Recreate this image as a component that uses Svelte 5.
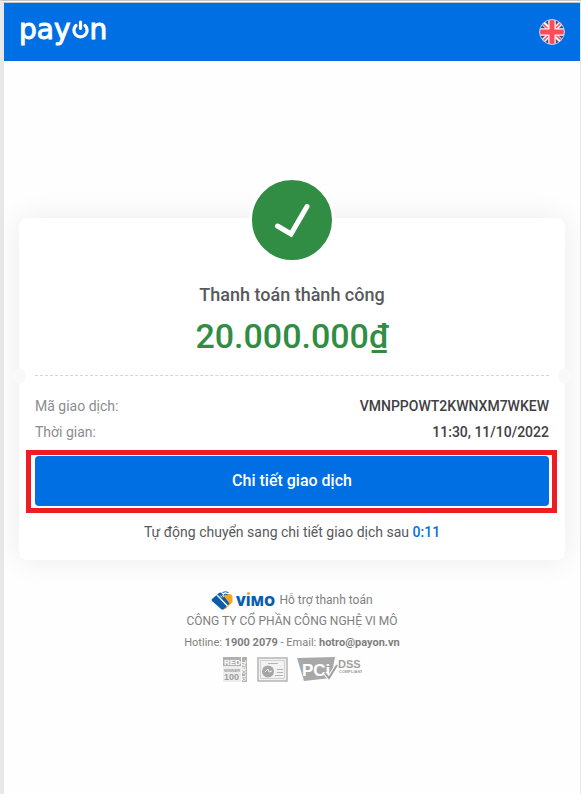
<script lang="ts">
    import { onMount } from 'svelte'

    const rows = [
        { label: 'Mã giao dịch:', value: 'VMNPPOWT2KWNXM7WKEW' },
        { label: 'Thời gian:', value: '11:30, 11/10/2022' }
    ]

    let seconds = $state(11)
    let paused = $state(true)

    const countdown = $derived(`0:${String(seconds).padStart(2, '0')}`)

    const resume = () => {
        paused = false
    }

    onMount(() => {
        const timer = setInterval(() => {
            if (!paused && seconds > 0) seconds -= 1
        }, 1000)
        return () => clearInterval(timer)
    })
</script>

<div class="page">
    <header>
        <a class="logo" href="#home" aria-label="payon">
            <span>pay</span>
            <svg width="17" height="20" viewBox="0 0 17 20" fill="none" stroke="#fff" stroke-width="3.2" stroke-linecap="round">
                <path d="M4 5.500a6.600 6.600 0 1 0 9 0" />
                <path d="M8.500 2v6.500" />
            </svg>
            <span>n</span>
        </a>
        <button class="lang" aria-label="English">
            <svg width="26" height="26" viewBox="0 0 26 26">
                <clipPath id="flag"><circle cx="13" cy="13" r="12.5" /></clipPath>
                <g clip-path="url(#flag)">
                    <path fill="#41479b" d="M0 0h26v26H0z" />
                    <path stroke="#f5f5f5" stroke-width="4.500" d="M2 2l22 22M24 2L2 24" />
                    <path stroke="#ff4b55" stroke-width="1.500" d="M2 3l10 10M24 2L14 12M2 24l10-10M24 23L14 13" />
                    <path stroke="#f5f5f5" stroke-width="7.500" d="M13 0v26M0 13h26" />
                    <path stroke="#ff4b55" stroke-width="5" d="M13 0v26M0 13h26" />
                </g>
                <circle cx="13" cy="13" r="12.4" fill="none" stroke="#b5d3f5" />
            </svg>
        </button>
    </header>

    <main>
        <section class="card">
            <div class="status">
                <svg width="80" height="80" viewBox="0 0 80 80" fill="none" stroke="#fff" stroke-width="5" stroke-linecap="round">
                    <path d="M25.500 46l13.500 8L55 26.500" />
                </svg>
            </div>
            <h1>Thanh toán thành công</h1>
            <p class="amount">20.000.000₫</p>
            <div class="divider"></div>
            <dl>
                {#each rows as row}
                    <div class="row">
                        <dt>{row.label}</dt>
                        <dd>{row.value}</dd>
                    </div>
                {/each}
            </dl>
            <div class="action">
                <button class="detail" onclick={resume}>Chi tiết giao dịch</button>
            </div>
            <p class="redirect">Tự động chuyển sang chi tiết giao dịch sau <b>{countdown}</b></p>
        </section>
    </main>

    <footer>
        <div class="support">
            <svg width="65" height="20" viewBox="0 0 65 20">
                <path fill="#faa61a" d="M13 3h5q3 0 3.500 3v5L14 18.500 9 10z" />
                <path fill="#0b5cab" d="M1 8l7-6q1.500-1 2.500 0l8 10.500-5.500 5.500q-1.500 1.500-3 0L1 10q-1-1 0-2z" />
                <path fill="none" stroke="#0b5cab" d="M11.500 1.500q3-1.500 6 0M13 3.800q2-1 3.500 0" />
                <path fill="none" stroke="#fff" stroke-width="1.300" d="M6 4l10.500 11" />
                <path fill="none" stroke="#fff" d="M9.500 4.500l1.500 2M11.500 4l1.500 2" />
                <text x="25" y="15" fill="#0b5cab" font-family="Open Sans" font-size="14" font-weight="800">VIMO</text>
                <circle cx="37.500" cy="2.500" r="1.600" fill="#faa61a" />
            </svg>
            <span>Hỗ trợ thanh toán</span>
        </div>
        <p class="company">CÔNG TY CỔ PHẦN CÔNG NGHỆ VI MÔ</p>
        <p class="contact">Hotline: <b>1900 2079</b> - Email: <b>hotro@payon.vn</b></p>
        <div class="badges">
            <svg width="25" height="25" viewBox="0 0 25 25" font-family="Liberation Sans" font-weight="700" fill="#9e9e9e">
                <path fill="#b0b0b0" d="M0 0h18v9H0zM19 0h5v25h-5z" />
                <path fill="#ededed" d="M0 9h18v16H0z" />
                <text x="1" y="8" font-size="8" fill="#fff">RED</text>
                <text x="1" y="15" font-size="4">WINNER</text>
                <text x="1" y="23" font-size="9">100</text>
                <text transform="translate(23 24) rotate(-90)" font-size="5" fill="#fff">GLOBAL</text>
            </svg>
            <svg width="31" height="25" viewBox="0 0 31 25">
                <path fill="#f2f2f2" stroke="#b4b4b4" stroke-width="1.500" d="M1 1h29v23H1z" />
                <path fill="none" stroke="#d0d0d0" d="M3.500 3.500h24v18h-24z" />
                <circle cx="11" cy="14.500" r="6" fill="#a6a6a6" />
                <path fill="none" stroke="#eee" d="M8 15l3-3 1 3 3-1" />
                <path stroke="#b4b4b4" d="M11 6.500h10M20 12.500h6M20 15.500h6M18 18.500h8" />
            </svg>
            <svg width="65" height="25" viewBox="0 0 65 25" font-family="Liberation Sans" font-weight="700">
                <path fill="#a8a8a8" d="M0 1l38-1-4 21-27 3z" />
                <text x="5" y="19" font-size="17" fill="#fff">PCi</text>
                <path fill="none" stroke="#fff" stroke-width="4" d="M28 16l4 5L40 8" />
                <path fill="none" stroke="#9e9e9e" stroke-width="2" d="M28 16l4 5L40 8" />
                <text x="41" y="11" font-size="11" fill="#a0a0a0">DSS</text>
                <text x="42" y="16" font-size="4" fill="#a0a0a0">COMPLIANT</text>
            </svg>
        </div>
    </footer>
</div>

<style>
    :global(body){margin:0;background:#fff;}
    .page{box-sizing:border-box;min-height:100vh;border-top:3px double #c6c6c6;border-left:4px solid #e8e8e8;border-right:1px solid #e8e8e8;background:#fefefe;font-family:Roboto,"Noto Sans",sans-serif;font-size:14px;color:#58595b;}
    h1,p,dl,dd{margin:0;}
    button{font-family:inherit;border:none;cursor:pointer;}
    b{font-weight:500;}
    svg{display:block;flex:none;}

    header{display:flex;justify-content:space-between;align-items:center;height:58px;padding:0 15px;background:#006fe3;}
    .logo{display:flex;align-items:center;gap:1px;padding-bottom:4px;font-family:"DejaVu Sans",sans-serif;font-size:28px;line-height:32px;color:#fff;text-decoration:none;-webkit-text-stroke:1px #fff;}
    .lang{padding:0;background:none;}

    main{padding:157px 15px 0;}
    .card{padding:0 16px 16px;border-radius:8px;background:#fff;box-shadow:0 0 30px rgba(0,0,0,0.08);text-align:center;}
    .status{display:inline-block;margin-top:-41px;border:3px solid #fff;border-radius:50%;background:#318d43;}
    h1{margin-top:15px;font-size:18px;line-height:28px;font-weight:500;}
    .amount{margin-top:7px;font-size:34px;line-height:40px;font-weight:500;color:#318d43;}
    .divider{position:relative;margin-top:19px;border-top:1px dashed #d5d5d5;}
    .divider::before,.divider::after{content:"";position:absolute;top:-7px;width:14px;height:14px;border-radius:50%;background:#f9f9f9;}
    .divider::before{left:-23px;}
    .divider::after{right:-23px;}
    dl{margin-top:17px;}
    .row{display:flex;justify-content:space-between;line-height:26px;}
    dt{color:#8a8d91;}
    dd{font-weight:500;color:#3f4044;}
    .action{position:relative;margin-top:11px;}
    .action::after{content:"";position:absolute;inset:-6px -8px -7px -9px;border:5px solid #ee1c25;pointer-events:none;}
    .detail{display:block;width:100%;height:50px;padding:0 0 2px;border-radius:4px;background:#006fe3;color:#fff;font-size:16px;font-weight:500;}
    .redirect{margin-top:14px;line-height:24px;}
    .redirect b{color:#006fe3;}

    footer{display:flex;flex-direction:column;align-items:center;padding:30px 15px;font-size:12px;line-height:21px;color:#808080;}
    .support{display:flex;align-items:center;gap:3px;}
    .contact{font-size:11px;}
    .contact b{font-weight:700;}
    .badges{display:flex;gap:9px;margin-top:4px;}
</style>
